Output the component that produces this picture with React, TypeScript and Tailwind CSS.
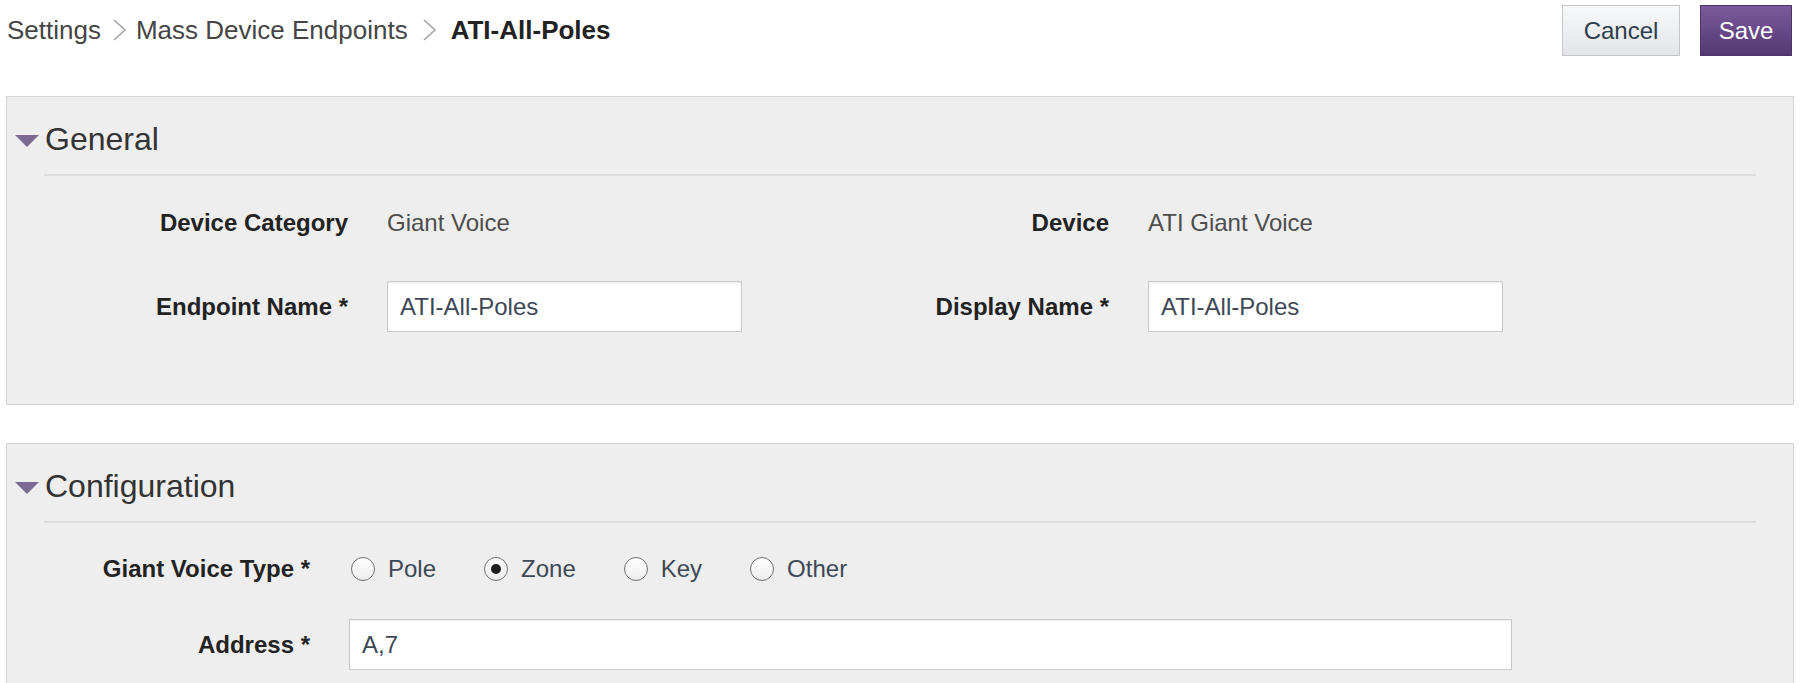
import React from "react";

function Chevron() {
  return (
    <svg width="15" height="24" viewBox="0 0 15 24" className="shrink-0">
      <polyline points="2,2 13,12 2,22" fill="none" stroke="#a3a3a3" strokeWidth="1.6" />
    </svg>
  );
}

function Caret() {
  return (
    <svg width="24" height="12" viewBox="0 0 24 12" className="shrink-0 mt-[3px]">
      <polygon points="0,0 24,0 12,12" fill="#7b6a92" />
    </svg>
  );
}

function Panel({ title, children, className }: { title: string; children: React.ReactNode; className?: string }) {
  return (
    <div className={"bg-[#eeeeee] border border-[#d6d6d6] " + (className ?? "")}>
      <div className="flex items-center pl-[8px] pt-[22px] h-[62px]">
        <Caret />
        <span className="ml-[6px] text-[32px] leading-[40px] text-[#333333]">{title}</span>
      </div>
      <div className="mx-[37px] mt-[15px] h-[2px] bg-[#dcdcdc]" />
      {children}
    </div>
  );
}

function Label({ text, width }: { text: string; width: string }) {
  return <div className={"text-right font-bold text-[24px] text-[#222222] shrink-0 " + width}>{text}</div>;
}

function TextBox({ value, width }: { value: string; width: string }) {
  return (
    <div
      className={
        "h-[51px] bg-white border border-[#c9c9c9] shadow-[inset_0_1px_2px_rgba(0,0,0,0.08)] flex items-center pl-[12px] text-[24px] text-[#3d4856] shrink-0 " +
        width
      }
    >
      {value}
    </div>
  );
}

function Radio({ label, checked }: { label: string; checked?: boolean }) {
  return (
    <div className="flex items-center mr-[48px]">
      <span className="w-[24px] h-[24px] rounded-full border border-[#707070] bg-gradient-to-b from-white to-[#ededed] flex items-center justify-center">
        {checked && <span className="w-[10px] h-[10px] rounded-full bg-[#1e1e1e]" />}
      </span>
      <span className="ml-[13px] text-[24px] text-[#3d4856]">{label}</span>
    </div>
  );
}

export default function App() {
  return (
    <div className="min-h-screen bg-white font-['Liberation_Sans',Arial,sans-serif] px-[6px] pb-[40px]">
      <div className="flex items-center justify-between pt-[5px]">
        <div className="flex items-center pl-[1px] mb-[1px] text-[26px] leading-[30px] text-[#454545]">
          <span>Settings</span>
          <span className="ml-[11px] mr-[9px] flex">
            <Chevron />
          </span>
          <span>Mass Device Endpoints</span>
          <span className="ml-[14px] mr-[14px] flex">
            <Chevron />
          </span>
          <span className="font-bold text-[#222222]">ATI-All-Poles</span>
        </div>
        <div className="flex items-center gap-[20px] pr-[2px]">
          <button className="w-[118px] h-[51px] border border-[#c6c6c6] bg-gradient-to-b from-[#f7f8fa] to-[#e3e5e8] text-[24px] text-[#2e3d4d]">
            Cancel
          </button>
          <button className="w-[92px] h-[51px] border border-[#4e3468] bg-gradient-to-b from-[#7b5a9d] to-[#553873] text-[24px] text-white">
            Save
          </button>
        </div>
      </div>

      <Panel title="General" className="mt-[40px] pb-[72px]">
        <div className="mt-[21px] flex items-center h-[51px]">
          <Label text="Device Category" width="w-[341px]" />
          <div className="ml-[39px] w-[355px] text-[24px] text-[#4d4d4d]">Giant Voice</div>
          <Label text="Device" width="w-[367px]" />
          <div className="ml-[39px] w-[355px] text-[24px] text-[#4d4d4d]">ATI Giant Voice</div>
        </div>
        <div className="mt-[33px] flex items-center h-[51px]">
          <Label text="Endpoint Name *" width="w-[341px]" />
          <div className="ml-[39px]">
            <TextBox value="ATI-All-Poles" width="w-[355px]" />
          </div>
          <Label text="Display Name *" width="w-[367px]" />
          <div className="ml-[39px]">
            <TextBox value="ATI-All-Poles" width="w-[355px]" />
          </div>
        </div>
      </Panel>

      <Panel title="Configuration" className="mt-[38px] pb-[80px]">
        <div className="mt-[20px] flex items-center h-[51px]">
          <Label text="Giant Voice Type *" width="w-[303px]" />
          <div className="ml-[41px] flex items-center">
            <Radio label="Pole" />
            <Radio label="Zone" checked />
            <Radio label="Key" />
            <Radio label="Other" />
          </div>
        </div>
        <div className="mt-[25px] flex items-center h-[51px]">
          <Label text="Address *" width="w-[303px]" />
          <div className="ml-[39px]">
            <TextBox value="A,7" width="w-[1163px]" />
          </div>
        </div>
      </Panel>
    </div>
  );
}
